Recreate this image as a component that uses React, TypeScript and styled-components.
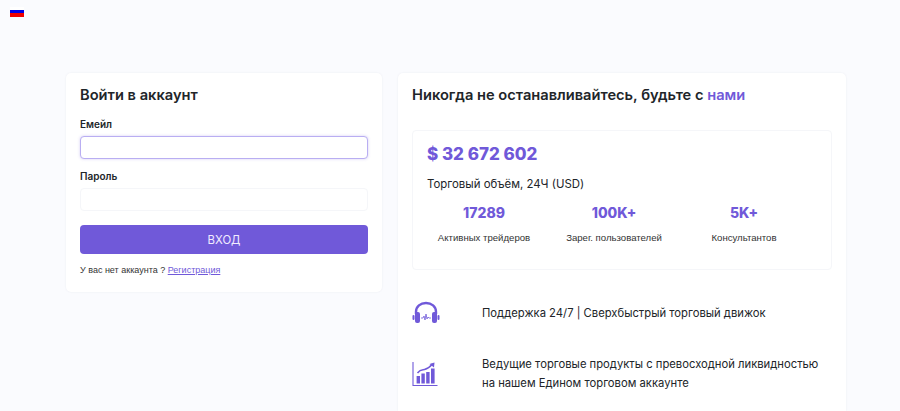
import styled, { createGlobalStyle } from 'styled-components'

const Global = createGlobalStyle`
  html, body {
    margin: 0;
    height: 411px;
    overflow: hidden;
    background: #fafbfe;
    font-family: Inter, "Liberation Sans", sans-serif;
    color: #212529;
  }
  * { box-sizing: border-box; }
`

const TopBar = styled.div`
  height: 73px;
  padding: 7px 0 0 10px;
`

const Flag = styled.div`
  width: 14px;
  height: 10px;
  background: linear-gradient(#fff 33%, #0000e6 33%, #0000e6 64%, #f00000 64%);
`

const Columns = styled.div`
  display: flex;
  gap: 16px;
  padding-left: 66px;
  align-items: flex-start;
`

const Card = styled.div<{ $width: number }>`
  width: ${p => p.$width}px;
  background: #fff;
  border-radius: 5px;
  box-shadow: 0 0 2px rgba(40, 50, 90, 0.08);
  padding: 13px 14px;
`

const TallCard = styled(Card)`
  height: 338px;
  padding-bottom: 0;
  border-radius: 5px 5px 0 0;
`

const Title = styled.h2`
  margin: 0;
  font-size: 14.65px;
  line-height: 19px;
  font-weight: 600;
  color: #212529;
`

const Accent = styled.span`
  color: #7059d9;
`

const Label = styled.label`
  display: block;
  margin: 9px 0 4px;
  font-size: 10px;
  line-height: 16px;
  font-weight: 600;
`

const FirstLabel = styled(Label)`
  margin-top: 11px;
`

const Input = styled.div<{ $focus?: boolean }>`
  height: 23px;
  border-radius: 4px;
  background: #fff;
  border: 1px solid ${p => (p.$focus ? '#b9aef2' : '#f5f6f9')};
  box-shadow: ${p => (p.$focus ? '0 0 3px rgba(112, 89, 217, 0.3)' : 'none')};
`

const Submit = styled.button`
  display: block;
  width: 100%;
  height: 29px;
  margin-top: 14px;
  border: 0;
  border-radius: 4px;
  background: #7059d9;
  color: #f0ecff;
  font: 400 11.4px Inter, sans-serif;
`

const Footnote = styled.p`
  margin: 9px 0 2px;
  font: 400 9px/14px "Liberation Sans", sans-serif;
  color: #333;
`

const TextLink = styled.a`
  color: #7059d9;
  text-decoration: underline;
`

const Panel = styled.div`
  height: 140px;
  margin-top: 25px;
  padding: 11px 14px;
  border: 1px solid #f5f6f9;
  border-radius: 4px;
`

const Amount = styled.div`
  font-size: 17px;
  line-height: 24px;
  font-weight: 800;
  color: #7059d9;
`

const Volume = styled.div`
  margin-top: 9px;
  font-size: 11.4px;
  line-height: 18px;
`

const Stats = styled.div`
  display: grid;
  grid-template-columns: 130px 130px 130px;
  margin: 10px 0 0 -8px;
`

const Stat = styled.div`
  text-align: center;
`

const StatValue = styled.div`
  font-size: 14px;
  line-height: 20px;
  font-weight: 800;
  color: #7059d9;
`

const StatLabel = styled.div`
  margin-top: 8px;
  font: 400 9.6px/14px "Liberation Sans", sans-serif;
  color: #333;
`

const Feature = styled.div`
  display: flex;
  align-items: center;
  margin-top: 31px;
`

const NextFeature = styled(Feature)`
  margin-top: 30px;
`

const FeatureIcon = styled.div`
  width: 70px;
  flex: none;
  line-height: 0;
`

const FeatureText = styled.div`
  font-size: 11.25px;
  line-height: 19px;
  color: #212529;
`

const Headset = () => (
  <svg width="28" height="24" viewBox="0 0 28 24" fill="none">
    <path d="M4 13V11C4 5.5 8.5 2 14 2s10 3.5 10 9v2" stroke="#7059d9" strokeWidth="2.4" />
    <rect x="3" y="11" width="5" height="11" rx="2" fill="#7059d9" />
    <rect x="20" y="11" width="5" height="11" rx="2" fill="#7059d9" />
    <rect x="0.5" y="14" width="2" height="5" rx="1" fill="#7059d9" />
    <rect x="25.5" y="14" width="2" height="5" rx="1" fill="#7059d9" />
    <path d="M9 17h2l1-2 1 4 1-6 1 5 1-2 1 1h2" stroke="#7059d9" strokeWidth="0.8" />
  </svg>
)

const Chart = () => (
  <svg width="26" height="26" viewBox="0 0 26 26" fill="none">
    <path d="M1 1v23.5h24.5" stroke="#7059d9" strokeWidth="1.1" />
    <rect x="4.6" y="15" width="3.4" height="7.5" fill="#7059d9" />
    <rect x="9.4" y="12.5" width="3.4" height="10" fill="#7059d9" />
    <rect x="14.2" y="11" width="3.4" height="11.5" fill="#7059d9" />
    <rect x="19" y="7.5" width="3.6" height="15" fill="#7059d9" />
    <path d="M5.5 12c3-4 5-3 7-3.5s5-2 8-5.5" stroke="#7059d9" strokeWidth="1.5" />
    <path d="M17.5 3L22.5 1.5l-.5 5z" fill="#7059d9" />
  </svg>
)

export default function App() {
  return (
    <>
      <Global />
      <TopBar>
        <Flag />
      </TopBar>
      <Columns>
        <Card $width={316}>
          <Title>Войти в аккаунт</Title>
          <FirstLabel>Емейл</FirstLabel>
          <Input $focus />
          <Label>Пароль</Label>
          <Input />
          <Submit>ВХОД</Submit>
          <Footnote>
            У вас нет аккаунта ? <TextLink href="#">Регистрация</TextLink>
          </Footnote>
        </Card>
        <TallCard $width={448}>
          <Title>
            Никогда не останавливайтесь, будьте с <Accent>нами</Accent>
          </Title>
          <Panel>
            <Amount>$ 32 672 602</Amount>
            <Volume>Торговый объём, 24Ч (USD)</Volume>
            <Stats>
              <Stat>
                <StatValue>17289</StatValue>
                <StatLabel>Активных трейдеров</StatLabel>
              </Stat>
              <Stat>
                <StatValue>100K+</StatValue>
                <StatLabel>Зарег. пользователей</StatLabel>
              </Stat>
              <Stat>
                <StatValue>5K+</StatValue>
                <StatLabel>Консультантов</StatLabel>
              </Stat>
            </Stats>
          </Panel>
          <Feature>
            <FeatureIcon>
              <Headset />
            </FeatureIcon>
            <FeatureText>Поддержка 24/7 | Сверхбыстрый торговый движок</FeatureText>
          </Feature>
          <NextFeature>
            <FeatureIcon>
              <Chart />
            </FeatureIcon>
            <FeatureText>
              Ведущие торговые продукты с превосходной ликвидностью
              <br />
              на нашем Едином торговом аккаунте
            </FeatureText>
          </NextFeature>
        </TallCard>
      </Columns>
    </>
  )
}
